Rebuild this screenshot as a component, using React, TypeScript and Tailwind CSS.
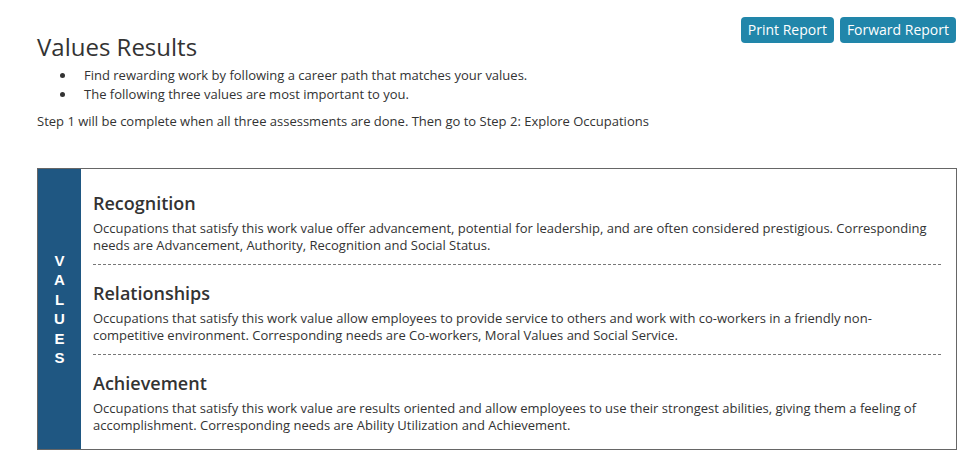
import React from 'react'

const values = [
  {
    title: 'Recognition',
    text: 'Occupations that satisfy this work value offer advancement, potential for leadership, and are often considered prestigious. Corresponding needs are Advancement, Authority, Recognition and Social Status.',
  },
  {
    title: 'Relationships',
    text: 'Occupations that satisfy this work value allow employees to provide service to others and work with co-workers in a friendly non-competitive environment. Corresponding needs are Co-workers, Moral Values and Social Service.',
  },
  {
    title: 'Achievement',
    text: 'Occupations that satisfy this work value are results oriented and allow employees to use their strongest abilities, giving them a feeling of accomplishment. Corresponding needs are Ability Utilization and Achievement.',
  },
]

const App = () => {
  return (
    <div className="min-h-screen bg-white pl-[37px] pr-[10px] pt-[17px] text-[#333] font-['Open_Sans',sans-serif]">
      <div className="flex items-start justify-between">
        <h1 className="pt-[15px] text-[24px] leading-[30px] font-normal">Values Results</h1>
        <div className="flex gap-[6px] mr-[1px]">
          <button className="h-[26px] px-[7px] rounded-[4px] bg-[#2186aa] text-white text-[14px] leading-[26px]">Print Report</button>
          <button className="h-[26px] px-[7px] rounded-[4px] bg-[#2186aa] text-white text-[14px] leading-[26px]">Forward Report</button>
        </div>
      </div>

      <ul className="mt-[4px] text-[13px] leading-[19px]">
        <li className="flex items-center">
          <span className="ml-[23px] mr-[19px] w-[5px] h-[5px] rounded-full bg-[#333]"></span>
          Find rewarding work by following a career path that matches your values.
        </li>
        <li className="flex items-center">
          <span className="ml-[23px] mr-[19px] w-[5px] h-[5px] rounded-full bg-[#333]"></span>
          The following three values are most important to you.
        </li>
      </ul>
      <p className="mt-[8px] text-[13px] leading-[19px]">Step 1 will be complete when all three assessments are done. Then go to Step 2: Explore Occupations</p>

      <div className="mt-[37px] flex border border-[#666]">
        <div className="w-[43px] shrink-0 bg-[#1f5782] flex flex-col items-center justify-center text-white font-bold text-[15px] leading-[19.5px] font-['Liberation_Sans',Arial,sans-serif]">
          {'VALUES'.split('').map((l, i) => (
            <span key={i}>{l}</span>
          ))}
        </div>
        <div className="flex-1 pl-[12px] pr-[15px] pt-[22px] pb-[15px]">
          {values.map((v, i) => (
            <div key={v.title} className={i < values.length - 1 ? 'pb-[10px] mb-[16px] border-b border-dashed border-[#777]' : ''}>
              <h2 className="text-[18px] leading-[24px] font-semibold">{v.title}</h2>
              <p className="mt-[5px] text-[13px] leading-[17px]">{v.text}</p>
            </div>
          ))}
        </div>
      </div>
    </div>
  )
}

export default App
